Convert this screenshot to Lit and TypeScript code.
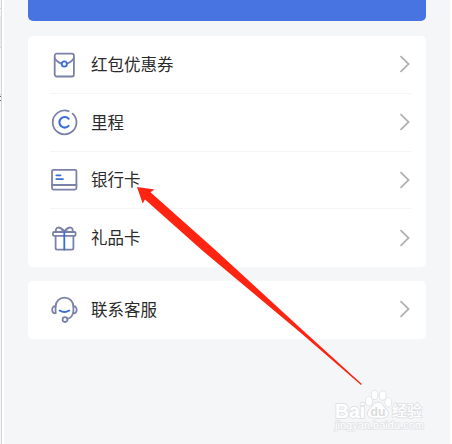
import { LitElement, html, svg, css } from "lit";
import { customElement, property } from "lit/decorators.js";

const icons: Record<string, unknown> = {
  coupon: svg`<rect x="4.7" y="3.7" width="19.2" height="22.8" rx="2"/><path d="M4.7 8.2Q8 13.5 14.2 14Q20.4 13.5 23.9 8.2"/><circle class="blue white" cx="14.3" cy="14" r="2.6"/>`,
  miles: svg`<path d="M18.6 3.2A11.9 11.9 0 1 0 22.6 5.6"/><path class="blue thick" d="M18.6 10.7A5.3 5.3 0 1 0 18.6 17.9"/>`,
  bank: svg`<rect x="2" y="4.8" width="24.4" height="19.8" rx="1.5"/><path d="M2 20H26.4"/><path class="blue" d="M6.3 10.3H10.5M6.3 14.1H13"/>`,
  gift: svg`<path d="M5.6 12.8V25Q5.6 26.6 7.2 26.6H21.8Q23.4 26.6 23.4 25V12.8"/><rect x="3" y="9" width="22.6" height="3.8" rx="1"/><path d="M6 8.8C5 3.8 9.4 2.6 14.3 8.4C19.2 2.6 23.6 3.8 22.6 8.8M9.8 8.8L14.3 8L18.8 8.8"/><path class="blue" d="M14.3 9V26.6"/>`,
  service: svg`<path d="M5.6 18V11.5A8.9 8.9 0 0 1 23.4 11.5V16Q22.8 22.4 17.4 24"/><path d="M5.6 11.3C1 10.7 1 18.9 5.6 18.2M23.4 11.3C27.8 10.7 27.8 18.9 23.4 18.2"/><circle cx="15" cy="24.6" r="2.4"/><path class="blue" d="M9.6 15.4Q14.4 18.6 19.2 15.4"/>`,
};

@customElement("menu-row")
class MenuRow extends LitElement {
  @property() icon = "";
  @property() label = "";
  static styles = css`
    :host { display: flex; align-items: center; height: 57.75px; padding: 0 15px 0 22px; box-sizing: border-box; }
    .icon { width: 29px; height: 30px; fill: none; stroke: #7b81a9; stroke-width: 1.8; stroke-linecap: round; stroke-linejoin: round; flex: none; }
    .blue { stroke: #3b6cdb; }
    .white { fill: #fff; }
    .thick { stroke-width: 2.1; }
    .label { flex: 1; margin: 0 0 2px 12px; font-size: 16.5px; line-height: 24px; color: #2b2b2b; }
    .chevron { width: 12px; height: 18px; margin-bottom: 1px; fill: none; stroke: #b2b2b2; stroke-width: 1.8; }
  `;
  render() {
    return html`<svg class="icon" viewBox="0 0 29 30">${icons[this.icon]}</svg>
      <span class="label">${this.label}</span>
      <svg class="chevron" viewBox="0 0 12 18"><path d="M1.5 1.2L9.6 9L1.5 16.8"/></svg>`;
  }
}

@customElement("app-root")
class AppRoot extends LitElement {
  static styles = css`
    :host { display: flex; position: relative; width: 452px; height: 444px; overflow: hidden; background: #fff; font-family: "Noto Sans CJK SC", sans-serif; }
    .edge { width: 4px; flex: none; height: 444px; }
    .page { width: 446px; box-sizing: border-box; padding: 0 24px; background: #f4f6f8; }
    .banner { height: 21px; background: #4874e2; border-radius: 0 0 5px 5px; }
    .card { height: 231px; margin-top: 15px; background: #fff; border-radius: 5px; }
    .card.second { height: 58px; margin-top: 14px; }
    .divider { height: 1px; margin: -1px 14px 0 22px; background: #f4f5f6; }
    .overlay { position: absolute; inset: 0; }
    .arrow { fill: #ff2412; }
    .mark { fill: #fff; stroke: #e0e2e4; stroke-width: 1.8; stroke-linejoin: round; paint-order: stroke; font-family: "Liberation Sans", "Noto Sans CJK SC", sans-serif; font-weight: bold; }
    .mark .url { font-weight: normal; stroke-width: 1.4; }
    .mark .du { fill: #d9dbdd; stroke: none; }
    .mark .cn { font-weight: 500; }
  `;
  render() {
    return html`
      <svg class="edge" viewBox="0 0 4 444">
        <path fill="#f6f6f7" d="M0 0H1V444H0Z"/>
        <path fill="#ececee" d="M0 16H1V47H0Z"/>
        <path fill="#d6d6d8" d="M1 0H2V444H1ZM0 8H1V9H0ZM0 47H1V48H0Z"/>
        <path fill="#a9dcec" d="M0 94H1V95H0Z"/>
        <path fill="#666" d="M0 96H1V97H0ZM0 100H1V101H0Z"/>
      </svg>
      <main class="page">
        <div class="banner"></div>
        <section class="card">
          <menu-row icon="coupon" label="红包优惠券"></menu-row>
          <div class="divider"></div>
          <menu-row icon="miles" label="里程"></menu-row>
          <div class="divider"></div>
          <menu-row icon="bank" label="银行卡"></menu-row>
          <div class="divider"></div>
          <menu-row icon="gift" label="礼品卡"></menu-row>
        </section>
        <section class="card second">
          <menu-row icon="service" label="联系客服"></menu-row>
        </section>
      </main>
      <svg class="overlay" width="452" height="444">
        <path class="arrow" d="M137 187L154.5 189.5L150.5 192.3L214.8 249.5L300 327.8L361.8 384L361 385L300 332.2L202.3 250.5L145 199.5L142.7 203.5Z"/>
        <g class="mark">
          <text x="335" y="417.5" font-size="20" textLength="30" lengthAdjust="spacingAndGlyphs">Bai</text>
          <ellipse cx="369" cy="401.3" rx="3" ry="4.2"/><ellipse cx="374.7" cy="395" rx="3" ry="4.3"/>
          <ellipse cx="382.7" cy="395.5" rx="3" ry="4.3"/><ellipse cx="388.3" cy="402.3" rx="3" ry="4.2"/>
          <path d="M378 402.5C373.5 402.5 373.5 406.5 370 409.5C365.5 414 368 419 378 417.5C388 419 390 414 386 409.5C382.5 406.5 382.5 402.5 378 402.5Z"/>
          <text class="du" x="370.5" y="416" font-size="13" textLength="15" lengthAdjust="spacingAndGlyphs">du</text>
          <text class="cn" x="392" y="416" font-size="15" textLength="30" lengthAdjust="spacingAndGlyphs">经验</text>
          <text class="url" x="335" y="429" font-size="10" textLength="89" lengthAdjust="spacingAndGlyphs">jingyan.baidu.com</text>
        </g>
      </svg>`;
  }
}
